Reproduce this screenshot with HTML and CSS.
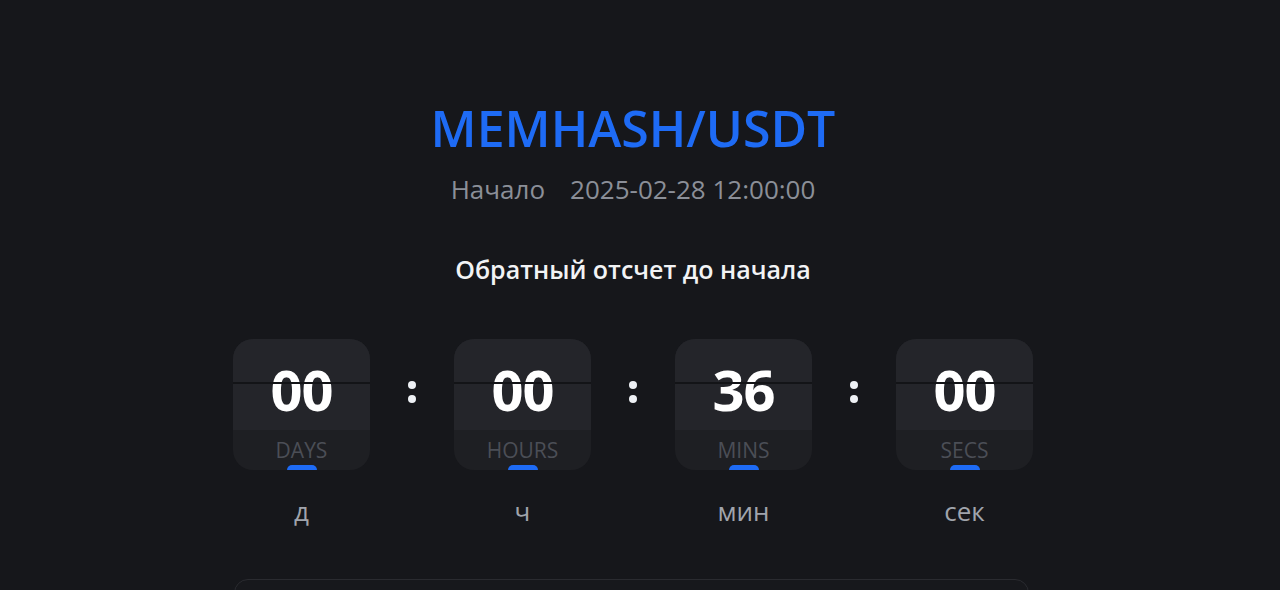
FILE: index.html
```html
<!DOCTYPE html>
<html lang="ru">
<head>
<meta charset="utf-8">
<link rel="stylesheet" href="styles.css">
</head>
<body>
<main class="page">
  <h1 class="title">MEMHASH/USDT</h1>
  <p class="start"><span class="start-label">Начало</span><span>2025-02-28 12:00:00</span></p>
  <h2 class="heading">Обратный отсчет до начала</h2>
  <div class="timer">
    <div class="unit">
      <div class="box">
        <div class="digits">00</div>
        <div class="box-label">DAYS</div>
        <span class="pill"></span>
      </div>
      <div class="ru">д</div>
    </div>
    <div class="colon"><i></i><i></i></div>
    <div class="unit">
      <div class="box">
        <div class="digits">00</div>
        <div class="box-label">HOURS</div>
        <span class="pill"></span>
      </div>
      <div class="ru">ч</div>
    </div>
    <div class="colon"><i></i><i></i></div>
    <div class="unit">
      <div class="box">
        <div class="digits">36</div>
        <div class="box-label">MINS</div>
        <span class="pill"></span>
      </div>
      <div class="ru">мин</div>
    </div>
    <div class="colon"><i></i><i></i></div>
    <div class="unit">
      <div class="box">
        <div class="digits">00</div>
        <div class="box-label">SECS</div>
        <span class="pill"></span>
      </div>
      <div class="ru">сек</div>
    </div>
  </div>
  <div class="card"></div>
</main>
</body>
</html>
```

FILE: styles.css
```css
* { box-sizing: border-box; }
html, body {
  margin: 0;
  padding: 0;
  background: #16171b;
  font-family: "Open Sans", "Liberation Sans", sans-serif;
  overflow: hidden;
  height: 590px;
}
.page {
  width: 800px;
  margin-left: 233px;
  padding-top: 94px;
  display: flex;
  flex-direction: column;
  align-items: center;
}
.title {
  margin: 0;
  font-size: 50px;
  font-weight: 600;
  line-height: 68px;
  color: #1e6bf5;
}
.start {
  margin: 0;
  margin-top: 9px;
  font-size: 26px;
  line-height: 36px;
  color: #8b8f98;
  display: flex;
  gap: 25px;
}
.heading {
  margin: 0;
  margin-top: 45px;
  font-size: 25px;
  font-weight: 600;
  line-height: 34px;
  color: #f2f3f5;
}
.timer {
  margin-top: 53px;
  display: grid;
  grid-template-columns: 137px 84px 137px 84px 137px 84px 137px;
  align-items: start;
}
.unit {
  display: flex;
  flex-direction: column;
  align-items: center;
}
.box {
  position: relative;
  width: 137px;
  height: 131px;
  border-radius: 20px;
  background: #1e1f23;
  overflow: hidden;
  display: flex;
  flex-direction: column;
}
.digits {
  position: relative;
  height: 91px;
  background: #24252a;
  color: #ffffff;
  font-size: 56px;
  font-weight: 700;
  line-height: 91px;
  text-align: center;
  letter-spacing: -1px;
  padding-top: 5px;
}
.digits::after {
  content: "";
  position: absolute;
  left: 0;
  right: 0;
  top: 43px;
  height: 2px;
  background: #131417;
}
.box-label {
  flex: 1;
  text-align: center;
  font-size: 21px;
  line-height: 40px;
  color: #4b4e56;
}
.pill {
  position: absolute;
  left: 50%;
  bottom: 0;
  width: 30px;
  height: 5px;
  margin-left: -15px;
  border-radius: 5px 5px 0 0;
  background: #1e6bf5;
}
.colon {
  height: 131px;
  display: flex;
  flex-direction: column;
  align-items: center;
  justify-content: center;
  gap: 6px;
  padding-bottom: 26px;
}
.colon i {
  display: block;
  width: 8px;
  height: 8px;
  border-radius: 50%;
  background: #eef1f5;
}
.ru {
  margin-top: 23px;
  font-size: 26px;
  line-height: 36px;
  color: #a0a4ac;
}
.card {
  margin-top: 50px;
  width: 795px;
  margin-left: -3px;
  height: 60px;
  border: 1px solid #2a2b30;
  border-radius: 14px;
  background: #17181c;
}
```
